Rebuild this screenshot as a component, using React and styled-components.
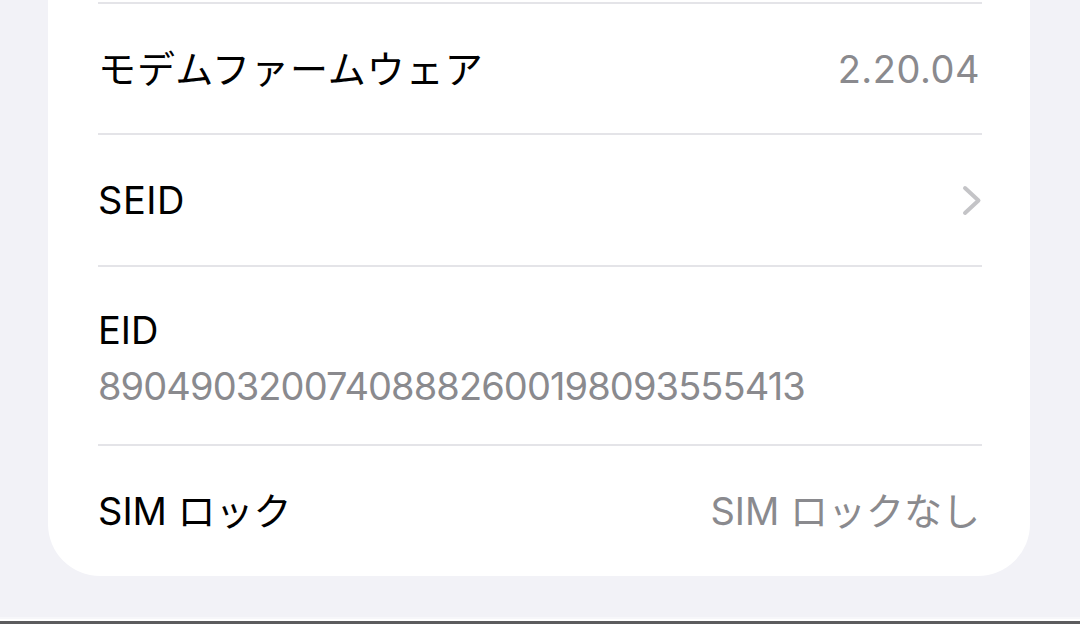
import React from "react";
import styled, { createGlobalStyle } from "styled-components";

const Global = createGlobalStyle`
  html, body { margin: 0; padding: 0; background: #f2f2f7; }
  body { font-family: Inter, "Noto Sans CJK JP", sans-serif; -webkit-font-smoothing: antialiased; }
`;

const Screen = styled.div`
  width: 1080px;
  height: 624px;
  display: flex;
  flex-direction: column;
  background: #f2f2f7;
  overflow: hidden;
`;

const Main = styled.div`
  flex: 1;
  padding: 0 50px 0 48px;
`;

const Card = styled.div`
  background: #ffffff;
  border-radius: 0 0 52px 52px;
  padding-top: 2px;
`;

const Row = styled.div`
  margin: 0 48px 0 50px;
  height: ${(p) => p.$h}px;
  box-sizing: border-box;
  border-top: ${(p) => (p.$sep ? "2px solid #e4e4e8" : "none")};
  display: flex;
  align-items: center;
  justify-content: space-between;
`;

const Stack = styled.div`
  display: flex;
  flex-direction: column;
  gap: 10px;
  padding-top: 4px;
`;

const Label = styled.span`
  font-size: 38px;
  line-height: 46px;
  color: #000;
  letter-spacing: ${(p) => p.$ls || "0px"};
`;

const Value = styled.span`
  font-size: 38px;
  line-height: 46px;
  color: #8a8a8e;
  margin-right: 2px;
  letter-spacing: ${(p) => p.$ls || "0px"};
`;

const Chevron = styled.svg`
  width: 20px;
  height: 31px;
  display: block;
`;

const Footer = styled.div`
  height: 7px;
  display: flex;
  flex-direction: column;
`;

const FooterLine = styled.div`
  height: ${(p) => p.$h}px;
  background: ${(p) => p.$c};
`;

export default function App() {
  return (
    <Screen>
      <Global />
      <Main>
        <Card>
          <Row $h={131} $sep>
            <Label $ls="1px">モデムファームウェア</Label>
            <Value $ls="0.5px">2.20.04</Value>
          </Row>
          <Row $h={132} $sep>
            <Label $ls="0.5px">SEID</Label>
            <Chevron viewBox="0 0 20 31">
              <path
                d="M3 3 L16.5 15.5 L3 28"
                fill="none"
                stroke="#c4c4c7"
                strokeWidth="4"
                strokeLinecap="round"
                strokeLinejoin="round"
              />
            </Chevron>
          </Row>
          <Row $h={179} $sep>
            <Stack>
              <Label>EID</Label>
              <Value $ls="-0.9px">89049032007408882600198093555413</Value>
            </Stack>
          </Row>
          <Row $h={132} $sep>
            <Label>SIM ロック</Label>
            <Value>SIM ロックなし</Value>
          </Row>
        </Card>
      </Main>
      <Footer>
        <FooterLine $h={2} $c="#f7f7fa" />
        <FooterLine $h={2} $c="#ffffff" />
        <FooterLine $h={3} $c="#5c5c5e" />
      </Footer>
    </Screen>
  );
}
